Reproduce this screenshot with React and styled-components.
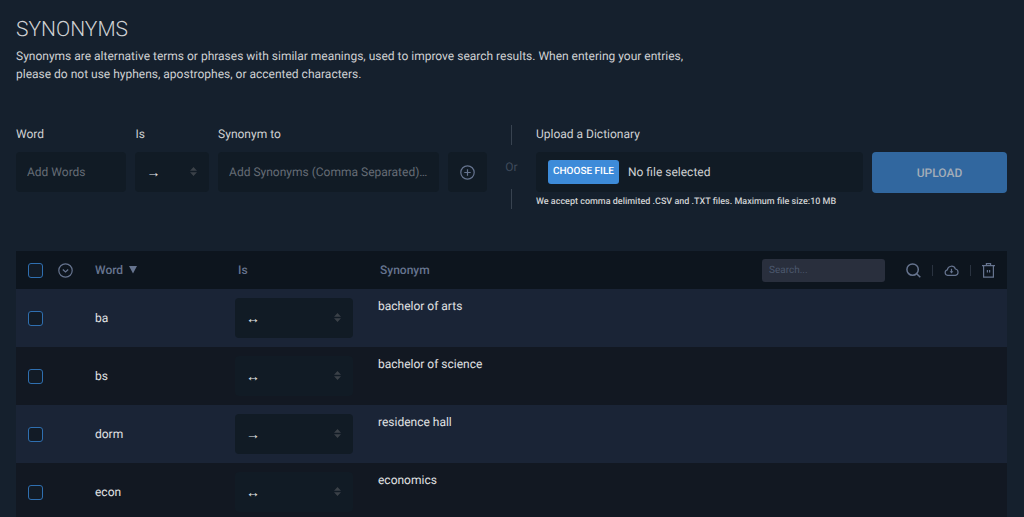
import { useState } from "react";
import styled, { createGlobalStyle } from "styled-components";

const GlobalStyle = createGlobalStyle`
  * {
    box-sizing: border-box;
  }
  body {
    margin: 0;
    background-color: #15202d;
    color: #cfd1d3;
    font-family: Roboto, "Liberation Sans", sans-serif;
    font-size: 12px;
    line-height: 18px;
    text-rendering: geometricPrecision;
  }
  button,
  input,
  select {
    font-family: inherit;
    font-size: inherit;
    text-rendering: inherit;
  }
`;

const SPage = styled.main`
  padding: 16px 17px 0 16px;
`;

const STitle = styled.h1`
  margin: 0 0 3px;
  font-weight: 300;
  font-size: 21px;
  line-height: 28px;
`;

const SIntro = styled.p`
  margin: 0;
  max-width: 680px;
`;

const SForms = styled.div`
  display: grid;
  grid-template-columns: 1fr 49px 1fr;
  margin-top: 42px;
  @media (max-width: 768px) {
    grid-template-columns: 1fr;
    row-gap: 16px;
  }
`;

const SAddForm = styled.form`
  display: grid;
  grid-template-columns: 3fr 2fr 6fr 39px;
  gap: 9px;
  align-items: end;
  align-self: start;
`;

const SUploadForm = styled.form`
  display: grid;
  grid-template-columns: 1fr 135px;
  column-gap: 9px;
`;

const SField = styled.div`
  display: flex;
  flex-direction: column;
  gap: 9px;
  min-width: 0;
`;

const SLabel = styled.label`
  font-weight: 400;
`;

const SInput = styled.input`
  width: 100%;
  height: 40px;
  padding: 0 11px;
  border: 0;
  border-radius: 4px;
  background-color: #111b25;
  color: #c8cacc;
  text-overflow: ellipsis;
  &::placeholder {
    color: #656c75;
    opacity: 1;
  }
`;

const SSelectBox = styled.div`
  position: relative;
  width: ${(props) => props.$width || "100%"};
  svg {
    position: absolute;
    right: 12px;
    top: 15px;
    pointer-events: none;
  }
`;

const SSelect = styled.select`
  display: block;
  appearance: none;
  width: 100%;
  height: 40px;
  padding: 0 11px;
  border: 0;
  border-radius: 4px;
  background-color: #111b25;
  color: #e4e6e8;
  font-family: "Liberation Sans", sans-serif;
  font-weight: 700;
  font-size: 14px;
`;

const SAddButton = styled.button`
  display: flex;
  justify-content: center;
  align-items: center;
  height: 40px;
  padding: 0;
  border: 0;
  border-radius: 4px;
  background-color: #111b25;
  color: #66748f;
  cursor: pointer;
`;

const SOr = styled.div`
  display: flex;
  flex-direction: column;
  align-items: center;
  justify-content: space-between;
  height: 84px;
  color: #3f4b5c;
  &::before,
  &::after {
    content: "";
    width: 1px;
    height: 20px;
    background-color: #384350;
  }
`;

const SFileBox = styled.label`
  display: flex;
  align-items: center;
  gap: 9px;
  height: 40px;
  padding: 0 12px;
  border-radius: 4px;
  background-color: #111b25;
  cursor: pointer;
`;

const SFileInput = styled.input`
  position: absolute;
  width: 1px;
  height: 1px;
  opacity: 0;
`;

const SChoose = styled.span`
  padding: 3px 5px;
  border-radius: 3px;
  background-color: #3d8bd9;
  color: #ffffff;
  font-weight: 500;
  font-size: 10px;
`;

const SUploadButton = styled.button`
  align-self: start;
  height: 41px;
  margin-top: 27px;
  border: 0;
  border-radius: 4px;
  background-color: #31679f;
  color: #a3adb8;
  font-weight: 500;
  cursor: pointer;
`;

const SHint = styled.p`
  grid-column: 1 / -1;
  margin: 0;
  font-weight: 500;
  font-size: 9px;
`;

const STable = styled.table`
  width: 100%;
  margin-top: 40px;
  border-collapse: collapse;
  table-layout: fixed;
`;

const SHeadRow = styled.tr`
  height: 38px;
  background-color: #0d151e;
  color: #66748f;
`;

const SRow = styled.tr`
  height: 58px;
  background-color: ${(props) => (props.$striped ? "#1a2436" : "#121822")};
`;

const SHead = styled.th`
  width: ${(props) => props.$width || "auto"};
  padding: 0 ${(props) => props.$right || "0px"} 0
    ${(props) => props.$pad || "0px"};
  font-weight: 500;
  text-align: left;
`;

const SCell = styled.td`
  padding: ${(props) => (props.$top ? "8px 0 0" : "0")};
  padding-left: ${(props) => props.$pad || "0px"};
  vertical-align: ${(props) => (props.$top ? "top" : "middle")};
  color: #e0e2e4;
`;

const SCheckbox = styled.input`
  display: block;
  appearance: none;
  width: 15px;
  height: 15px;
  margin: 0;
  border: 1px solid #2f6fb0;
  border-radius: 3px;
  background-color: #121b26;
  &:checked {
    background-color: #2f6fb0;
  }
`;

const SIconButton = styled.button`
  display: flex;
  padding: 0;
  border: 0;
  background: none;
  color: #66748f;
  cursor: pointer;
`;

const SSortButton = styled(SIconButton)`
  align-items: center;
  gap: 6px;
  font-weight: 500;
`;

const SHeadBar = styled.div`
  display: flex;
  justify-content: space-between;
  align-items: center;
`;

const STools = styled.div`
  display: flex;
  align-items: center;
`;

const SSearch = styled.input`
  width: 123px;
  height: 23px;
  margin-right: 21px;
  padding: 0 7px;
  border: 0;
  border-radius: 3px;
  background-color: #292f3d;
  color: #c8cacc;
  font-size: 10px;
  &::placeholder {
    color: #4c586d;
    opacity: 1;
  }
`;

const SSeparator = styled.span`
  width: 1px;
  height: 11px;
  margin: 0 11px;
  background-color: #2a3340;
`;

const Carets = () => (
  <svg width="7" height="9" viewBox="0 0 7 9" fill="#3b4148">
    <path d="M3.5 0 7 3.8H0zM0 5.2h7L3.5 9z" />
  </svg>
);

const PlusIcon = () => (
  <svg width="15" height="15" viewBox="0 0 15 15" fill="none" stroke="currentColor" strokeWidth="1.2">
    <circle cx="7.5" cy="7.5" r="6.7" />
    <path d="M7.5 4.3v6.4M4.3 7.5h6.4" />
  </svg>
);

const ChevronIcon = () => (
  <svg width="15" height="15" viewBox="0 0 15 15" fill="none" stroke="currentColor" strokeWidth="1.2">
    <circle cx="7.5" cy="7.5" r="6.7" />
    <path d="m4.8 6.5 2.7 2.5 2.7-2.5" />
  </svg>
);

const SortIcon = () => (
  <svg width="8" height="8" viewBox="0 0 8 8" fill="currentColor">
    <path d="M0 0h8L4 7.5z" />
  </svg>
);

const SearchIcon = () => (
  <svg width="15" height="15" viewBox="0 0 15 15" fill="none" stroke="currentColor" strokeWidth="1.5">
    <circle cx="6.6" cy="6.6" r="5.7" />
    <path d="m10.7 10.7 3.6 3.6" />
  </svg>
);

const CloudIcon = () => (
  <svg width="15" height="11" viewBox="0 0 15 11" fill="none" stroke="currentColor" strokeWidth="1.2">
    <path d="M3.6 10.3a2.8 2.8 0 0 1-.3-5.5A4.2 4.2 0 0 1 11.4 4a3.2 3.2 0 0 1 0 6.3z" />
    <path d="M7.5 3.8V7" />
    <path d="M5.6 6.2h3.8L7.5 8.4z" fill="currentColor" stroke="none" />
  </svg>
);

const TrashIcon = () => (
  <svg width="13" height="15" viewBox="0 0 13 15" fill="none" stroke="currentColor" strokeWidth="1.2">
    <path d="M0 2.6h13M1.6 2.6v11.6h9.8V2.6M4.4 2.4V.7h4.2v1.7M5.4 7v2.6M7.6 7v2.6" />
  </svg>
);

const entries = [
  { word: "ba", is: "↔", synonym: "bachelor of arts" },
  { word: "bs", is: "↔", synonym: "bachelor of science" },
  { word: "dorm", is: "→", synonym: "residence hall" },
  { word: "econ", is: "↔", synonym: "economics" },
];

const Relation = ({ id, label, value, width }) => (
  <SSelectBox $width={width}>
    <SSelect id={id} aria-label={label} defaultValue={value}>
      <option value="→">→</option>
      <option value="↔">↔</option>
    </SSelect>
    <Carets />
  </SSelectBox>
);

const App = () => {
  const [fileName, setFileName] = useState("");
  const stop = (e) => e.preventDefault();

  return (
    <SPage>
      <GlobalStyle />
      <STitle>SYNONYMS</STitle>
      <SIntro>
        Synonyms are alternative terms or phrases with similar meanings, used to
        improve search results. When entering your entries, please do not use
        hyphens, apostrophes, or accented characters.
      </SIntro>
      <SForms>
        <SAddForm onSubmit={stop}>
          <SField>
            <SLabel htmlFor="word">Word</SLabel>
            <SInput id="word" placeholder="Add Words" />
          </SField>
          <SField>
            <SLabel htmlFor="is">Is</SLabel>
            <Relation id="is" value="→" />
          </SField>
          <SField>
            <SLabel htmlFor="synonym">Synonym to</SLabel>
            <SInput id="synonym" placeholder="Add Synonyms (Comma Separated)..." />
          </SField>
          <SAddButton aria-label="Add synonym">
            <PlusIcon />
          </SAddButton>
        </SAddForm>
        <SOr>Or</SOr>
        <SUploadForm onSubmit={stop}>
          <SField>
            <SLabel htmlFor="dictionary">Upload a Dictionary</SLabel>
            <SFileBox>
              <SFileInput
                id="dictionary"
                type="file"
                accept=".csv,.txt"
                onChange={(e) => setFileName(e.target.files[0]?.name || "")}
              />
              <SChoose>CHOOSE FILE</SChoose>
              {fileName || "No file selected"}
            </SFileBox>
          </SField>
          <SUploadButton>UPLOAD</SUploadButton>
          <SHint>
            We accept comma delimited .CSV and .TXT files. Maximum file size:10 MB
          </SHint>
        </SUploadForm>
      </SForms>
      <STable>
        <thead>
          <SHeadRow>
            <SHead $width="42px" $pad="12px">
              <SCheckbox type="checkbox" aria-label="Select all" />
            </SHead>
            <SHead $width="37px">
              <SIconButton aria-label="More actions">
                <ChevronIcon />
              </SIconButton>
            </SHead>
            <SHead $width="140px">
              <SSortButton>
                Word <SortIcon />
              </SSortButton>
            </SHead>
            <SHead $width="143px" $pad="3px">Is</SHead>
            <SHead $pad="2px" $right="12px">
              <SHeadBar>
                Synonym
                <STools>
                  <SSearch type="search" aria-label="Search" placeholder="Search..." />
                  <SIconButton aria-label="Search entries">
                    <SearchIcon />
                  </SIconButton>
                  <SSeparator />
                  <SIconButton aria-label="Download">
                    <CloudIcon />
                  </SIconButton>
                  <SSeparator />
                  <SIconButton aria-label="Delete">
                    <TrashIcon />
                  </SIconButton>
                </STools>
              </SHeadBar>
            </SHead>
          </SHeadRow>
        </thead>
        <tbody>
          {entries.map((entry, i) => (
            <SRow key={entry.word} $striped={i % 2 === 0}>
              <SCell $pad="12px">
                <SCheckbox type="checkbox" aria-label={`Select ${entry.word}`} />
              </SCell>
              <SCell />
              <SCell>{entry.word}</SCell>
              <SCell>
                <Relation
                  label={`Relation for ${entry.word}`}
                  value={entry.is}
                  width="118px"
                />
              </SCell>
              <SCell $top>{entry.synonym}</SCell>
            </SRow>
          ))}
        </tbody>
      </STable>
    </SPage>
  );
};

export default App;
